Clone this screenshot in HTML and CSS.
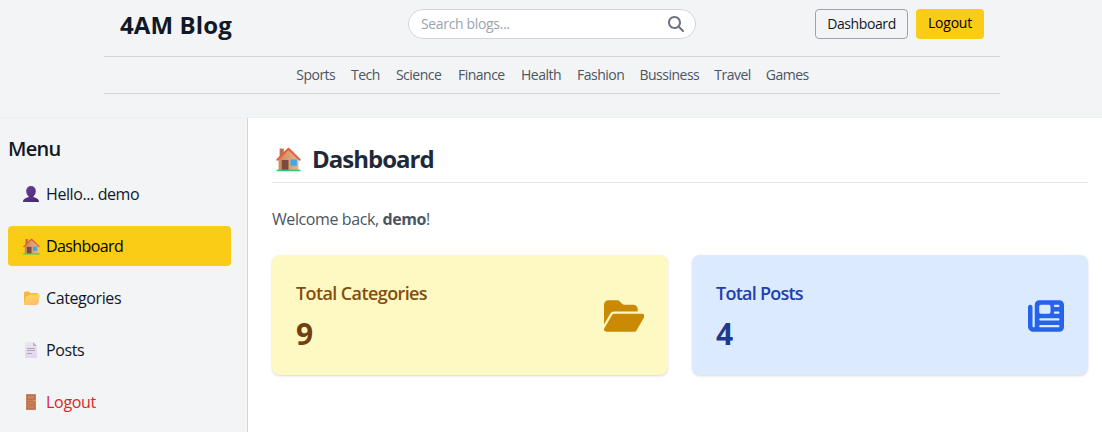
FILE: index.html
```html
<!DOCTYPE html>
<html lang="en">
<head>
<meta charset="utf-8">
<title>4AM Blog</title>
<link rel="stylesheet" href="styles.css">
</head>
<body>
<svg class="defs" width="0" height="0" aria-hidden="true">
  <defs>
    <linearGradient id="wall" x1="0" x2="1"><stop offset="0" stop-color="#c98a5e"/><stop offset="1" stop-color="#e8b387"/></linearGradient>
    <linearGradient id="purple" x1="0" x2="1" y2="1"><stop offset="0" stop-color="#6a419c"/><stop offset="1" stop-color="#44256e"/></linearGradient>
    <linearGradient id="fold" x1="0" x2="0.3" y2="1"><stop offset="0" stop-color="#ffdc5a"/><stop offset="1" stop-color="#ffbd6b"/></linearGradient>
    <linearGradient id="page" x1="0" x2="0" y2="1"><stop offset="0" stop-color="#ebe6f3"/><stop offset="1" stop-color="#e3d5ee"/></linearGradient>
    <symbol id="house" viewBox="0 0 24 24">
      <path fill="#b5764f" d="M3.500 1.500h4V10h-4z"/>
      <path fill="url(#wall)" d="M12 2 21.500 11.500V22h-19V11.500z"/>
      <path fill="#7b4b41" d="M5.500 12.500h6.500V22H5.500z"/>
      <path fill="#3fa9f0" d="M14 12h6v6h-6z"/>
      <path fill="none" stroke="#ec5a3c" stroke-width="1.900" stroke-linejoin="round" stroke-linecap="round" d="M1.300 12.200 12 1.700l10.700 10.500"/>
      <path fill="#35c474" d="M.5 21.800h23V23.300H.5z"/>
    </symbol>
  </defs>
</svg>

<header class="header">
  <div class="container">
    <div class="topbar">
      <h1 class="brand">4AM Blog</h1>
      <div class="search">
        <span class="placeholder">Search blogs...</span>
        <svg class="search-icon" viewBox="0 0 512 512"><path d="M416 208c0 45.900-14.900 88.300-40 122.700L502.600 457.400c12.500 12.500 12.500 32.800 0 45.300s-32.800 12.500-45.300 0L330.700 376c-34.400 25.200-76.800 40-122.700 40C93.100 416 0 322.900 0 208S93.100 0 208 0S416 93.100 416 208zM208 352a144 144 0 1 0 0-288 144 144 0 1 0 0 288z"/></svg>
      </div>
      <div class="actions">
        <a class="btn btn-outline">Dashboard</a>
        <a class="btn btn-primary">Logout</a>
      </div>
    </div>
    <nav class="nav">
      <a>Sports</a><a>Tech</a><a>Science</a><a>Finance</a><a>Health</a><a>Fashion</a><a>Bussiness</a><a>Travel</a><a>Games</a>
    </nav>
  </div>
</header>

<div class="layout">
  <aside class="sidebar">
    <h2 class="menu-title">Menu</h2>
    <div class="menu">
      <a class="item"><svg class="emoji" viewBox="0 0 18 18"><path fill="url(#purple)" d="M9 1c3 0 4.800 2 4.800 5 0 2.600-1.100 4.300-2.300 5.200v1c2.800.5 5.500 1.800 5.500 4.800H1c0-3 2.700-4.300 5.500-4.800v-1C5.300 10.300 4.200 8.600 4.200 6c0-3 1.800-5 4.800-5z"/></svg><span>Hello... demo</span></a>
      <a class="item active"><svg class="emoji"><use href="#house"/></svg><span>Dashboard</span></a>
      <a class="item"><svg class="emoji" viewBox="0 0 18 18"><path fill="#f6b83c" d="M2 4Q2 2.500 3.300 2.500h3.500L8.500 4H15q1.500 0 1.500 1.500V14H2z"/><path fill="url(#fold)" d="M8 5.500h8.500q1.500 0 1.200 1.500l-1.700 7.500Q15.700 16 14.500 16H3Q1.800 16 2.100 14.700L3.800 8.300Q4.200 7 5.500 7h1z"/></svg><span>Categories</span></a>
      <a class="item"><svg class="emoji" viewBox="0 0 18 18"><path fill="url(#page)" d="M3 1h8l4 4v12H3z"/><path fill="#bfb3cc" d="M11 1l4 4h-4z"/><path stroke="#b0a6bb" stroke-width="1" d="M5 7.500h8M5 9.500h8M5 12.500h5"/></svg><span>Posts</span></a>
      <a class="item danger"><svg class="emoji" viewBox="0 0 18 18"><path fill="#cb835f" d="M4 1h10v16H4z"/><path fill="none" stroke="#b56b4b" stroke-width=".8" d="M5.500 2.500h7v4h-7zM5.500 8.500h7v2.500h-7zM5.500 12.800h7v3h-7z"/><path fill="#ef9c4c" d="M11.500 7H14v1.200h-2.500z"/></svg><span>Logout</span></a>
    </div>
  </aside>
  <main class="main">
    <h2 class="page-title"><svg class="house"><use href="#house"/></svg><span>Dashboard</span></h2>
    <p class="welcome">Welcome back, <strong>demo</strong>!</p>
    <div class="cards">
      <section class="card yellow">
        <div>
          <h3 class="card-title">Total Categories</h3>
          <p class="count">9</p>
        </div>
        <svg class="icon-folder" viewBox="0 0 576 512"><path d="M88.700 223.800L0 375.800V96C0 60.700 28.700 32 64 32H181.500c17 0 33.300 6.700 45.300 18.700l26.500 26.500c12 12 28.300 18.700 45.300 18.700H416c35.300 0 64 28.700 64 64v32H144c-22.800 0-43.800 12.100-55.300 31.800zm27.600 16.100C122.100 230 132.600 224 144 224H544c11.500 0 22 6.100 27.700 16.100s5.700 22.200-.1 32.100l-112 192C453.900 474 443.400 480 432 480H32c-11.500 0-22-6.100-27.700-16.100s-5.700-22.200 .1-32.100l112-192z"/></svg>
      </section>
      <section class="card blue">
        <div>
          <h3 class="card-title posts-title">Total Posts</h3>
          <p class="count">4</p>
        </div>
        <svg class="icon-news" viewBox="0 0 512 512"><path d="M96 96c0-35.300 28.700-64 64-64H448c35.300 0 64 28.700 64 64V416c0 35.300-28.700 64-64 64H80c-44.200 0-80-35.800-80-80V128c0-17.700 14.300-32 32-32s32 14.300 32 32V400c0 8.800 7.200 16 16 16s16-7.200 16-16V96zm64 24v80c0 13.300 10.700 24 24 24H296c13.300 0 24-10.700 24-24V120c0-13.300-10.700-24-24-24H184c-13.300 0-24 10.700-24 24zm208-8c0 8.800 7.200 16 16 16h48c8.800 0 16-7.200 16-16s-7.200-16-16-16H384c-8.800 0-16 7.200-16 16zm0 96c0 8.800 7.200 16 16 16h48c8.800 0 16-7.200 16-16s-7.200-16-16-16H384c-8.800 0-16 7.200-16 16zM160 304c0 8.800 7.200 16 16 16H432c8.800 0 16-7.200 16-16s-7.200-16-16-16H176c-8.800 0-16 7.200-16 16zm0 96c0 8.800 7.200 16 16 16H432c8.800 0 16-7.200 16-16s-7.200-16-16-16H176c-8.800 0-16 7.200-16 16z"/></svg>
      </section>
    </div>
  </main>
</div>
</body>
</html>
```
FILE: styles.css
```css
* { box-sizing: border-box; margin: 0; padding: 0; }
html, body { height: 100%; overflow: hidden; }
body { display: flex; flex-direction: column; background: #fff; color: #111827; font-family: "Segoe UI", "Open Sans", "Noto Sans", sans-serif; font-size: 16px; line-height: 24px; white-space: nowrap; }
.defs { position: absolute; }
.header { flex: none; height: 118px; background: #f3f4f6; border-bottom: 1px solid #eeeff1; padding-left: 104px; }
.container { width: 896px; }
.topbar { display: grid; grid-template-columns: 288px 288px 288px; height: 56px; padding: 9px 16px 0; align-items: start; }
.brand { font-size: 24px; line-height: 32px; font-weight: 700; letter-spacing: 0.1px; }
.search { display: flex; align-items: center; justify-content: space-between; height: 30px; padding: 0 11px 0 12px; border: 1px solid #d1d5db; border-radius: 15px; background: #fff; font-size: 14px; }
.placeholder { color: #9ca3af; letter-spacing: -0.35px; }
.search-icon { width: 16px; height: 16px; fill: #6b7280; }
.actions { display: flex; justify-content: flex-end; gap: 8px; }
.btn { height: 30px; border-radius: 4px; font-size: 14px; line-height: 28px; text-align: center; letter-spacing: -0.4px; }
.btn-outline { width: 93px; border: 1px solid #9ca3af; }
.btn-primary { width: 68px; background: #facc15; color: #000; letter-spacing: -0.2px; }
.nav { display: grid; grid-template-columns: 40px 28px 47px 47px 41px 47px 59px 36px 42px; column-gap: 15.700px; justify-content: center; height: 38px; border-top: 1px solid #d1d5db; border-bottom: 1px solid #d1d5db; color: #4b5563; font-size: 14px; line-height: 36px; letter-spacing: -0.5px; }
.nav a { display: flex; justify-content: center; }
.layout { flex: 1; display: flex; min-height: 0; }
.sidebar { flex: none; width: 248px; padding: 17px 16px 0 8px; background: #f3f4f6; border-right: 1px solid #d1d5db; }
.menu-title { font-size: 20px; line-height: 28px; font-weight: 600; letter-spacing: -0.7px; }
.menu { display: flex; flex-direction: column; gap: 12px; padding-top: 11px; }
.item { display: flex; align-items: center; height: 40px; padding-left: 14px; gap: 6px; border-radius: 4px; line-height: 24px; letter-spacing: -0.4px; }
.active { background: #facc15; color: #000; letter-spacing: -0.6px; }
.danger { color: #dc2626; letter-spacing: -0.3px; }
.emoji { width: 18px; height: 18px; flex: none; }
.active .emoji { width: 17px; height: 17px; margin: 0 0 0 1px; }
.main { flex: 1; padding: 24px 14px 0 24px; }
.page-title { display: flex; align-items: center; gap: 11px; height: 41px; padding: 0 0 6px 4px; border-bottom: 1px solid #e5e7eb; color: #1f2937; font-size: 24px; line-height: 32px; letter-spacing: -1px; }
.house { width: 25px; height: 25px; }
.welcome { padding-top: 24px; color: #4b5563; line-height: 25px; letter-spacing: -0.4px; }
.cards { display: grid; grid-template-columns: 1fr 1fr; gap: 24px; padding-top: 23px; }
.card { display: flex; align-items: center; justify-content: space-between; height: 120px; padding: 2px 24px 0; border-radius: 8px; box-shadow: 0 1px 3px rgba(0, 0, 0, .1), 0 1px 2px rgba(0, 0, 0, .06); }
.yellow { background: #fef9c3; color: #854d0e; }
.blue { background: #dbeafe; color: #1e40af; }
.card-title { font-size: 18px; line-height: 27px; font-weight: 550; letter-spacing: -0.6px; }
.posts-title { letter-spacing: -0.75px; }
.count { padding-top: 9px; font-size: 30px; line-height: 36px; font-weight: 700; }
.yellow .count { color: #713f12; }
.blue .count { color: #1e3a8a; }
.icon-folder { width: 40.500px; height: 36px; fill: #ca8a04; }
.icon-news { width: 36px; height: 36px; fill: #2563eb; }
```
